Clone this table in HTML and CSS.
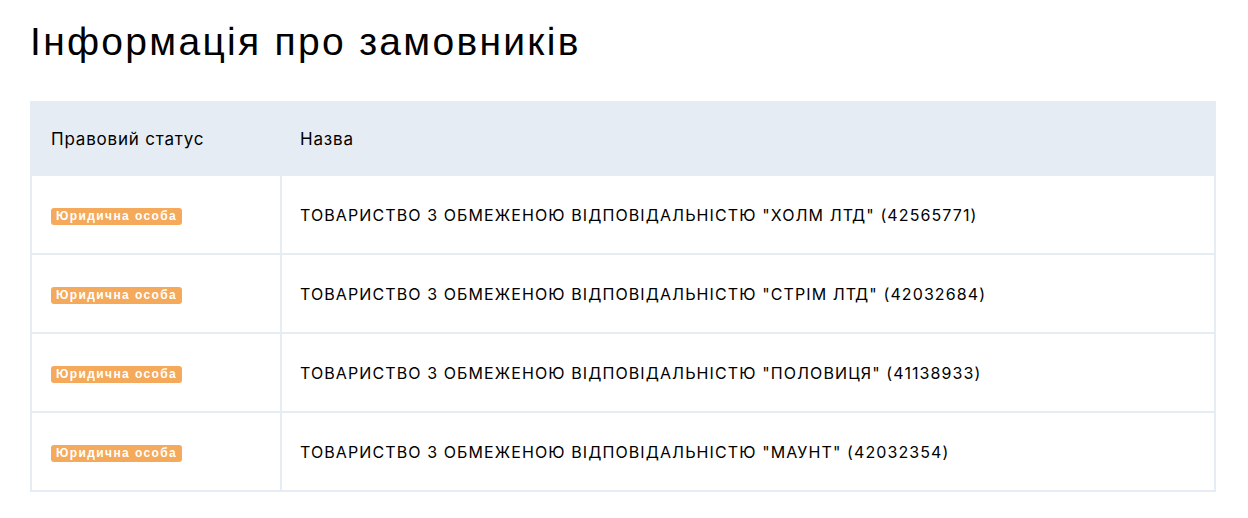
FILE: index.html
```html
<!DOCTYPE html>
<html lang="uk">
<head>
<meta charset="utf-8">
<link rel="stylesheet" href="styles.css">
</head>
<body>
<div class="page">
  <h1 class="title">Інформація про замовників</h1>
  <table class="tbl">
    <thead>
      <tr><th class="c1">Правовий статус</th><th class="c2">Назва</th></tr>
    </thead>
    <tbody>
      <tr><td class="c1"><span class="badge">Юридична особа</span></td><td class="c2">ТОВАРИСТВО З ОБМЕЖЕНОЮ ВІДПОВІДАЛЬНІСТЮ "ХОЛМ ЛТД" (42565771)</td></tr>
      <tr><td class="c1"><span class="badge">Юридична особа</span></td><td class="c2">ТОВАРИСТВО З ОБМЕЖЕНОЮ ВІДПОВІДАЛЬНІСТЮ "СТРІМ ЛТД" (42032684)</td></tr>
      <tr><td class="c1"><span class="badge">Юридична особа</span></td><td class="c2">ТОВАРИСТВО З ОБМЕЖЕНОЮ ВІДПОВІДАЛЬНІСТЮ "ПОЛОВИЦЯ" (41138933)</td></tr>
      <tr><td class="c1"><span class="badge">Юридична особа</span></td><td class="c2">ТОВАРИСТВО З ОБМЕЖЕНОЮ ВІДПОВІДАЛЬНІСТЮ "МАУНТ" (42032354)</td></tr>
    </tbody>
  </table>
</div>
</body>
</html>
```

FILE: styles.css
```css
html, body { margin: 0; padding: 0; background: #fff; }
body { font-family: "Liberation Sans", Arial, sans-serif; color: #000; }
.page { padding: 20px 32px 0 30px; }
.title {
  margin: 0 0 37px 0;
  font-size: 39px;
  font-weight: 400;
  line-height: 44px;
  letter-spacing: 2.3px;
}
.tbl {
  width: 1186px;
  border-collapse: collapse;
  font-family: Inter, "Noto Sans", sans-serif;
}
.tbl th {
  background: #e6ecf3;
  height: 71px;
  padding: 0 20px;
  text-align: left;
  font-weight: 400;
  font-size: 17px;
  letter-spacing: 0.8px;
  border: 2px solid #e6ecf3;
}
.tbl td {
  height: 77px;
  padding: 0 20px;
  font-size: 16px;
  letter-spacing: 1.1px;
  border: 2px solid #e6ecf3;
}
.tbl .c1 { width: 209px; padding-left: 19px; }
.tbl .c2 { padding-left: 18px; }
.badge {
  display: inline-block;
  background: #f4a95b;
  color: #fff;
  font-family: "Liberation Sans", Arial, sans-serif;
  font-weight: 700;
  font-size: 12px;
  line-height: 17px;
  letter-spacing: 1.4px;
  padding: 0 5px;
  border-radius: 3px;
  vertical-align: middle;
}
```
